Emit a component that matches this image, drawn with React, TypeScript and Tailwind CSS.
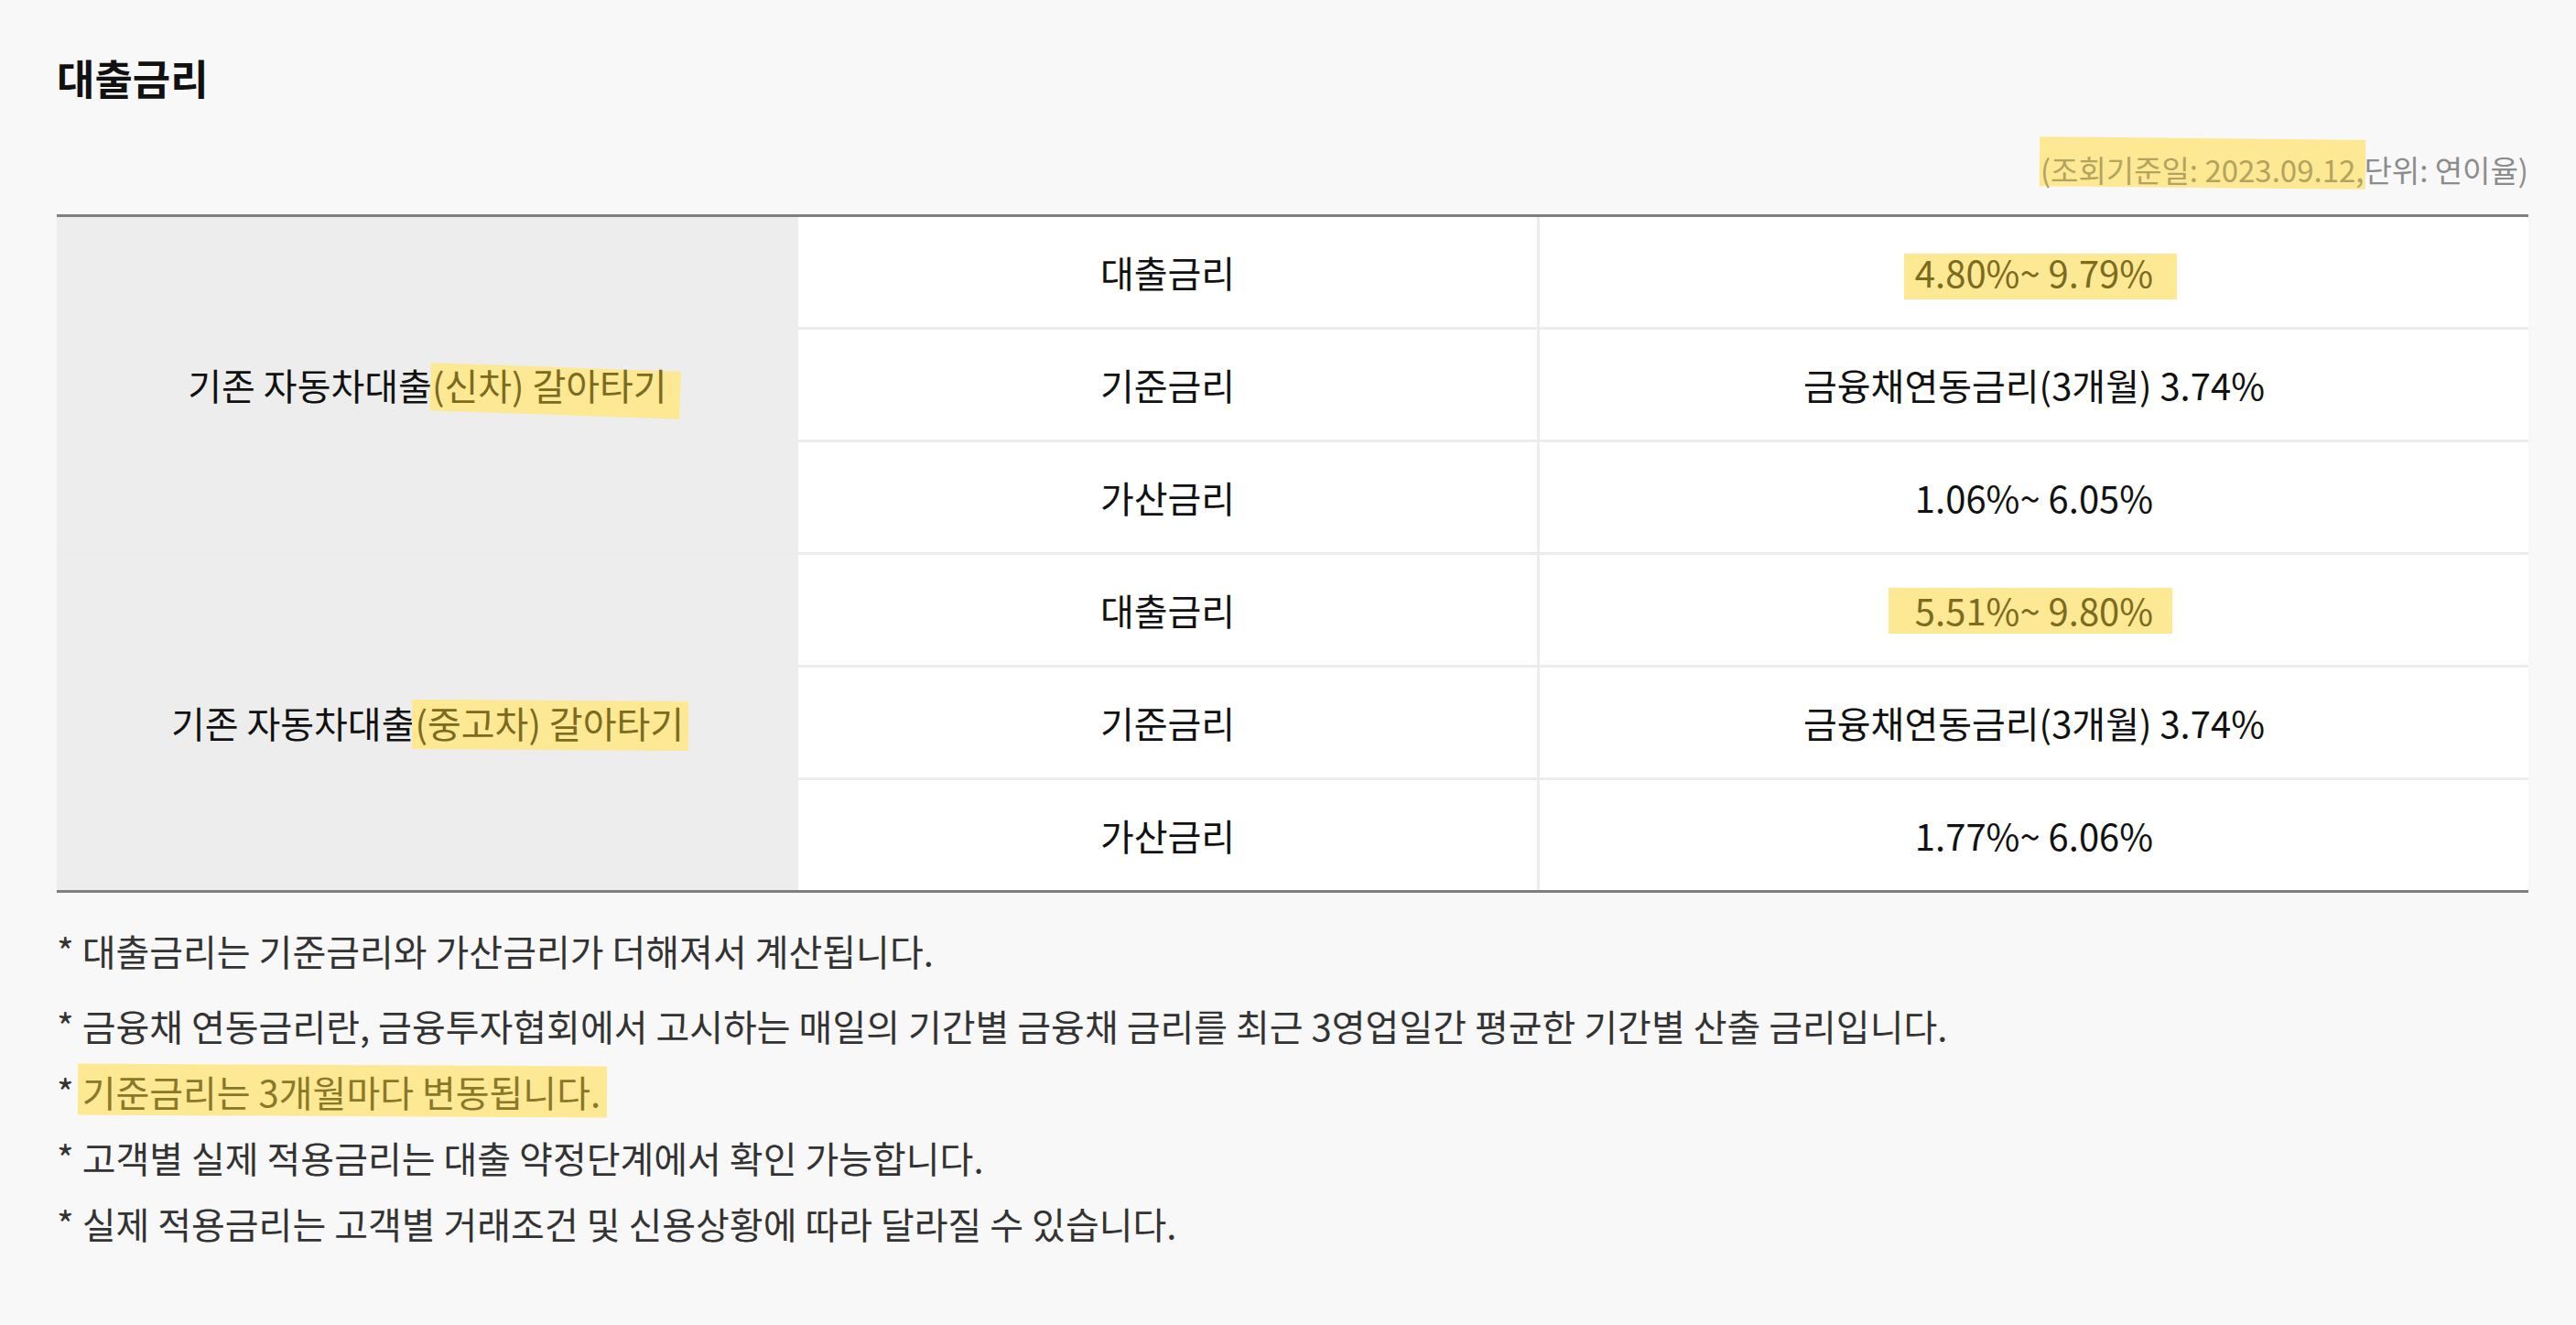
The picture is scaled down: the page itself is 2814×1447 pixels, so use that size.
import type { ReactNode } from 'react';

// marker-style highlight drawn behind the text
function Mark({ children, className = '', hl = '' }: { children: ReactNode; className?: string; hl?: string }) {
  return (
    <span
      className={`relative isolate before:absolute before:-z-10 before:bg-[#fde893] ${hl} ${className}`}
    >
      {children}
    </span>
  );
}

const groups = [
  {
    label: (
      <>
        기존 자동차대출
        <Mark
          className="text-[#7c6b1e]"
          hl="before:-left-[2px] before:-right-[14px] before:top-[10px] before:-bottom-[4px] before:rotate-[2deg]"
        >
          (신차) 갈아타기
        </Mark>
      </>
    ),
    rows: [
      {
        name: '대출금리',
        value: (
          <Mark
            className="text-[#7c6b1e]"
            hl="before:-left-[12px] before:-right-[26px] before:top-[9px] before:-bottom-[1px]"
          >
            4.80%~ 9.79%
          </Mark>
        ),
      },
      { name: '기준금리', value: '금융채연동금리(3개월) 3.74%' },
      { name: '가산금리', value: '1.06%~ 6.05%' },
    ],
  },
  {
    label: (
      <>
        기존 자동차대출
        <Mark
          className="text-[#7c6b1e]"
          hl="before:-left-[3px] before:-right-[5px] before:top-[5px] before:-bottom-[1px] before:rotate-[0.4deg]"
        >
          (중고차) 갈아타기
        </Mark>
      </>
    ),
    rows: [
      {
        name: '대출금리',
        value: (
          <Mark
            className="text-[#7c6b1e]"
            hl="before:-left-[29px] before:-right-[21px] before:top-[5px] before:bottom-[3px]"
          >
            5.51%~ 9.80%
          </Mark>
        ),
      },
      { name: '기준금리', value: '금융채연동금리(3개월) 3.74%' },
      { name: '가산금리', value: '1.77%~ 6.06%' },
    ],
  },
];

const notes: ReactNode[] = [
  '대출금리는 기준금리와 가산금리가 더해져서 계산됩니다.',
  '금융채 연동금리란, 금융투자협회에서 고시하는 매일의 기간별 금융채 금리를 최근 3영업일간 평균한 기간별 산출 금리입니다.',
  <Mark
    className="text-[#8a7828]"
    hl="before:-left-[5px] before:-right-[7px] before:top-[0px] before:bottom-[2px] before:rotate-[0.3deg]"
  >
    기준금리는 3개월마다 변동됩니다.
  </Mark>,
  '고객별 실제 적용금리는 대출 약정단계에서 확인 가능합니다.',
  '실제 적용금리는 고객별 거래조건 및 신용상황에 따라 달라질 수 있습니다.',
];

export default function App() {
  return (
    <div className="min-h-screen bg-[#f8f8f8] pl-[62px] pr-[52px] pt-[62px] font-['Noto_Sans_CJK_KR','Noto_Sans',sans-serif]">
      <h2 className="text-[45px] font-bold leading-none text-[#111]">대출금리</h2>

      <p className="mt-[62px] text-right text-[33px] leading-none text-[#8c8c8c]">
        <Mark
          className="text-[#b3a35e]"
          hl="before:-left-[1px] before:right-[-1px] before:top-[-10px] before:bottom-[4px] before:rotate-[0.6deg]"
        >
          (조회기준일: 2023.09.12,
        </Mark>
        단위: 연이율)
      </p>

      {/* rate table */}
      <div className="mt-[32px] grid grid-cols-[30%_30%_40%] border-y-[3px] border-[#7f7f7f] bg-white text-[40px] text-[#111]">
        {groups.map((g, gi) => (
          <div key={gi} className="contents">
            <div
              className={`row-span-3 flex items-center justify-center bg-[#ededed] ${
                gi === 0 ? 'border-b-[3px] border-[#ececec]' : ''
              }`}
            >
              <span>{g.label}</span>
            </div>
            {g.rows.map((r, ri) => {
              const last = gi === groups.length - 1 && ri === g.rows.length - 1;
              return (
                <div key={ri} className="contents">
                  <div
                    className={`flex items-center justify-center border-r-[3px] border-[#ececec] ${
                      last ? 'h-[120px]' : 'h-[123px] border-b-[3px]'
                    }`}
                  >
                    {r.name}
                  </div>
                  <div
                    className={`flex items-center justify-center border-[#ececec] ${
                      last ? 'h-[120px]' : 'h-[123px] border-b-[3px]'
                    }`}
                  >
                    <span>{r.value}</span>
                  </div>
                </div>
              );
            })}
          </div>
        ))}
      </div>

      <ul className="mt-[27px] text-[40px] leading-[72px] text-[#333]">
        {notes.map((n, i) => (
          <li key={i} className={i === 0 ? 'mb-[10px]' : ''}>
            * {n}
          </li>
        ))}
      </ul>
    </div>
  );
}
